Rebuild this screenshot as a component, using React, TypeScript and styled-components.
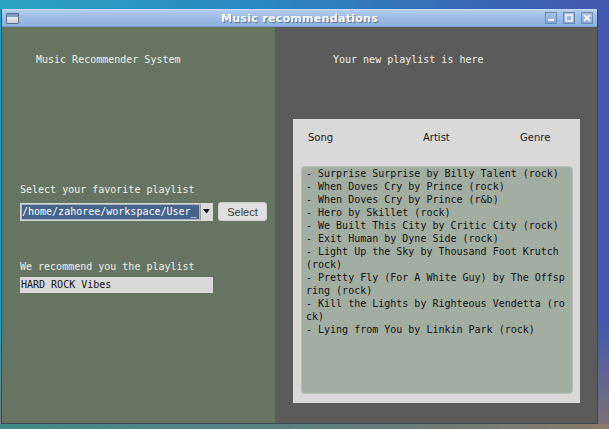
import React from 'react';
import styled, { createGlobalStyle } from 'styled-components';

const mono = `'DejaVu Sans Mono', 'Liberation Mono', monospace`;
const sans = `'DejaVu Sans', 'Liberation Sans', sans-serif`;

const playlist = [
  '- Surprise Surprise by Billy Talent (rock)',
  '- When Doves Cry by Prince (rock)',
  '- When Doves Cry by Prince (r&b)',
  '- Hero by Skillet (rock)',
  '- We Built This City by Critic City (rock)',
  '- Exit Human by Dyne Side (rock)',
  '- Light Up the Sky by Thousand Foot Krutch (rock)',
  '- Pretty Fly (For A White Guy) by The Offspring (rock)',
  '- Kill the Lights by Righteous Vendetta (rock)',
  '- Lying from You by Linkin Park (rock)',
];

const GlobalStyle = createGlobalStyle`
  html, body {
    margin: 0;
    padding: 0;
    width: 609px;
    height: 429px;
    overflow: hidden;
  }
  body {
    background:
      linear-gradient(180deg, rgba(0, 0, 0, 0) 75%, rgba(135, 118, 105, 0.85) 100%),
      linear-gradient(90deg, #2aa4c4 0%, #2c86bf 45%, #3a66b6 80%, #4358ae 100%);
  }
`;

const Desktop = styled.div`
  padding: 9px 11px 5px 1px;
  height: 429px;
  box-sizing: border-box;
  background: linear-gradient(90deg, #3f8a84 0%, #5a7f80 50%, #8a7868 100%) bottom / 100% 5px no-repeat;
`;

const Window = styled.div`
  display: flex;
  flex-direction: column;
  height: 415px;
  border: 1px solid #3c4650;
  border-top: none;
  box-sizing: border-box;
  background: #5b5b5b;
`;

const TitleBar = styled.div`
  position: relative;
  height: 18px;
  display: flex;
  align-items: center;
  justify-content: center;
  background: linear-gradient(180deg, #b4cdf0 0%, #9cbbe6 50%, #8eb0e0 100%);
  border-top: 1px solid #c9dbf5;
  border-bottom: 1px solid #7f9cc8;
  box-sizing: border-box;
`;

const Title = styled.span`
  font-family: ${sans};
  font-weight: bold;
  font-size: 11px;
  color: #ffffff;
  text-shadow: 1px 1px 0 #5c7294;
  letter-spacing: 0.3px;
`;

const WindowIcon = styled.div`
  position: absolute;
  left: 4px;
  top: 3px;
  width: 13px;
  height: 11px;
  border: 1px solid #5a6c86;
  border-radius: 1px;
  background: linear-gradient(180deg, #7f9cc8 0 3px, #eceff4 3px, #c8ccd4 100%);
  box-sizing: border-box;
`;

const Controls = styled.div`
  position: absolute;
  right: 4px;
  top: 2px;
  display: flex;
  gap: 6px;
`;

const ControlButton = styled.div`
  width: 12px;
  height: 12px;
  box-sizing: border-box;
  border: 1px solid #6e8bb8;
  background: linear-gradient(180deg, #a9c2e8, #87a8d8);
  display: flex;
  align-items: center;
  justify-content: center;
`;

const Body = styled.div`
  flex: 1;
  display: flex;
`;

const LeftPanel = styled.div`
  width: 273px;
  background: #667561;
  display: flex;
  flex-direction: column;
  padding: 27px 0 0 18px;
  box-sizing: border-box;
`;

const RightPanel = styled.div`
  flex: 1;
  background: #5b5b5b;
  display: flex;
  flex-direction: column;
  padding: 27px 17px 20px 18px;
  box-sizing: border-box;
`;

const Label = styled.div<{ $top?: number; $indent?: number }>`
  font-family: ${mono};
  font-size: 10px;
  line-height: 12px;
  color: #eef0ea;
  margin-top: ${(p) => p.$top ?? 0}px;
  margin-left: ${(p) => p.$indent ?? 0}px;
  white-space: pre;
`;

const Row = styled.div`
  display: flex;
  align-items: center;
  gap: 5px;
  margin-top: 6px;
`;

const Combo = styled.div`
  width: 193px;
  height: 18px;
  box-sizing: border-box;
  border: 1px solid #d8d8d8;
  display: flex;
  background: #d8d8d8;
`;

const ComboValue = styled.div`
  flex: 1;
  min-width: 0;
  background: #46648a;
  border: 1px solid #aab4c2;
  color: #ffffff;
  font-family: ${mono};
  font-size: 10px;
  line-height: 14px;
  white-space: nowrap;
  overflow: hidden;
`;

const ComboArrow = styled.div`
  width: 11px;
  display: flex;
  align-items: center;
  justify-content: center;
  background: #dcdcdc;
  border-left: 1px solid #9a9a9a;
`;

const Button = styled.div`
  width: 49px;
  height: 19px;
  box-sizing: border-box;
  background: #e0e0e0;
  border: 1px solid #d0d0d0;
  border-radius: 3px;
  display: flex;
  align-items: center;
  justify-content: center;
  font-family: 'Liberation Sans', Arial, sans-serif;
  font-size: 11px;
  color: #3a3a3a;
`;

const Entry = styled.div`
  width: 193px;
  height: 16px;
  margin-top: 4px;
  box-sizing: border-box;
  background: #d9d9d9;
  padding-left: 1px;
  font-family: ${mono};
  font-size: 10px;
  line-height: 16px;
  color: #111;
`;

const Card = styled.div`
  flex: 1;
  margin-top: 53px;
  background: #d9d9d9;
  display: flex;
  flex-direction: column;
  padding: 0 7px 9px 8px;
`;

const Header = styled.div`
  display: grid;
  grid-template-columns: 115px 97px 1fr;
  height: 47px;
  box-sizing: border-box;
  align-items: start;
  padding: 13px 0 0 7px;
  font-family: ${sans};
  font-size: 10px;
  line-height: 12px;
  color: #1a1a1a;
`;

const ListBox = styled.div`
  flex: 1;
  background: #a3aea3;
  border: 1px solid #b7beb7;
  border-radius: 4px;
  padding: 0 5px 0 4px;
  font-family: ${mono};
  font-size: 10px;
  line-height: 13px;
  color: #111;
`;

const ListLine = styled.div`
  width: 261px;
  word-break: break-all;
  white-space: pre-wrap;
`;

export default function App() {
  return (
    <>
      <GlobalStyle />
      <Desktop>
        <Window>
          <TitleBar>
            <WindowIcon />
            <Title>Music recommendations</Title>
            <Controls>
              <ControlButton>
                <svg width="8" height="8" viewBox="0 0 8 8">
                  <rect x="1" y="5" width="6" height="2" fill="#eef3fb" />
                </svg>
              </ControlButton>
              <ControlButton>
                <svg width="8" height="8" viewBox="0 0 8 8">
                  <rect x="1" y="1" width="6" height="6" fill="none" stroke="#eef3fb" strokeWidth="1.6" />
                </svg>
              </ControlButton>
              <ControlButton>
                <svg width="8" height="8" viewBox="0 0 8 8">
                  <path d="M1 1 L7 7 M7 1 L1 7" stroke="#eef3fb" strokeWidth="1.8" />
                </svg>
              </ControlButton>
            </Controls>
          </TitleBar>
          <Body>
            <LeftPanel>
              <Label $indent={16}>Music Recommender System</Label>
              <Label $top={118}>Select your favorite playlist</Label>
              <Row>
                <Combo>
                  <ComboValue>/home/zahoree/workspace/User_</ComboValue>
                  <ComboArrow>
                    <svg width="7" height="5" viewBox="0 0 7 5">
                      <path d="M0 0 L7 0 L3.5 4.5 Z" fill="#111" />
                    </svg>
                  </ComboArrow>
                </Combo>
                <Button>Select</Button>
              </Row>
              <Label $top={40}>We recommend you the playlist</Label>
              <Entry>HARD ROCK Vibes</Entry>
            </LeftPanel>
            <RightPanel>
              <Label $indent={40}>Your new playlist is here</Label>
              <Card>
                <Header>
                  <span>Song</span>
                  <span>Artist</span>
                  <span>Genre</span>
                </Header>
                <ListBox>
                  {playlist.map((line) => (
                    <ListLine key={line}>{line}</ListLine>
                  ))}
                </ListBox>
              </Card>
            </RightPanel>
          </Body>
        </Window>
      </Desktop>
    </>
  );
}
